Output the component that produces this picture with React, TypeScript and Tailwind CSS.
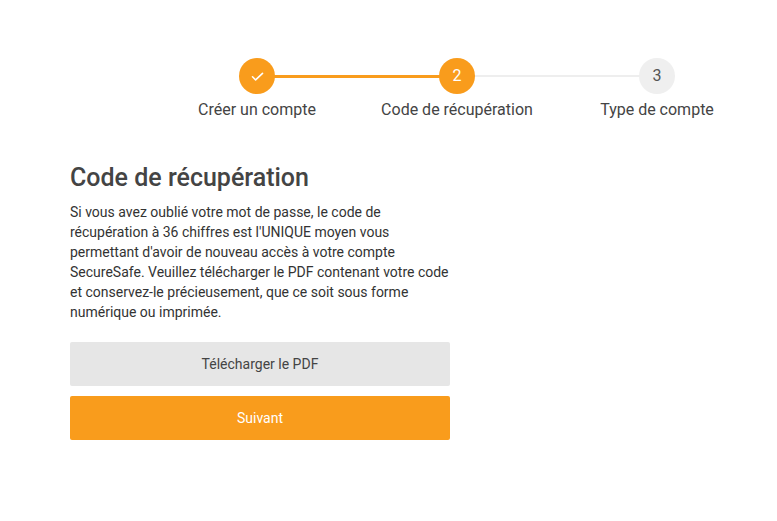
import React from "react";

const steps = [
  { label: "Créer un compte", state: "done" },
  { label: "Code de récupération", state: "current" },
  { label: "Type de compte", state: "todo" },
];

function Stepper() {
  return (
    <div className="flex pl-[157px] pt-[58px]">
      {steps.map((step, i) => (
        <div key={step.label} className="relative flex w-[200px] flex-col items-center">
          {i < steps.length - 1 && (
            <div
              className={
                step.state === "done"
                  ? "absolute left-[100px] top-[17px] h-[3px] w-[200px] bg-[#f99c1c]"
                  : "absolute left-[100px] top-[17px] h-[2px] w-[200px] bg-[#eeeeee]"
              }
            />
          )}
          <div
            className={
              step.state === "todo"
                ? "relative z-10 flex h-9 w-9 items-center justify-center rounded-full bg-[#efefef] text-[16px] text-[#555]"
                : "relative z-10 flex h-9 w-9 items-center justify-center rounded-full bg-[#f99c1c] text-[16px] text-white"
            }
          >
            {step.state === "done" ? (
              <svg width="15" height="15" viewBox="0 0 24 24" fill="none" stroke="currentColor" strokeWidth="2.5" strokeLinecap="round" strokeLinejoin="round">
                <path d="M4 12.5l5 5L20 7" />
              </svg>
            ) : (
              i + 1
            )}
          </div>
          <span className="mt-[6px] whitespace-nowrap text-[16px] leading-[20px] text-[#444]">{step.label}</span>
        </div>
      ))}
    </div>
  );
}

export default function App() {
  return (
    <div className="min-h-[521px] w-full bg-white font-['Roboto',sans-serif] text-[#333]">
      <Stepper />
      <div className="ml-[70px] mt-[43px] w-[380px]">
        <h1 className="text-[25px] font-medium leading-[30px] text-[#444]">Code de récupération</h1>
        <p className="mt-[9px] text-[14px] leading-[20px] text-[#333]">
          Si vous avez oublié votre mot de passe, le code de récupération à 36 chiffres est l'UNIQUE moyen vous permettant d'avoir de nouveau accès à votre compte SecureSafe. Veuillez télécharger le PDF contenant votre code et conservez-le précieusement, que ce soit sous forme numérique ou imprimée.
        </p>
        <div className="mt-[20px] flex flex-col gap-[10px]">
          <button className="h-[44px] w-full rounded-[2px] bg-[#e6e6e6] text-[14px] text-[#444]">Télécharger le PDF</button>
          <button className="h-[44px] w-full rounded-[2px] bg-[#f99c1c] text-[14px] text-white">Suivant</button>
        </div>
      </div>
    </div>
  );
}
